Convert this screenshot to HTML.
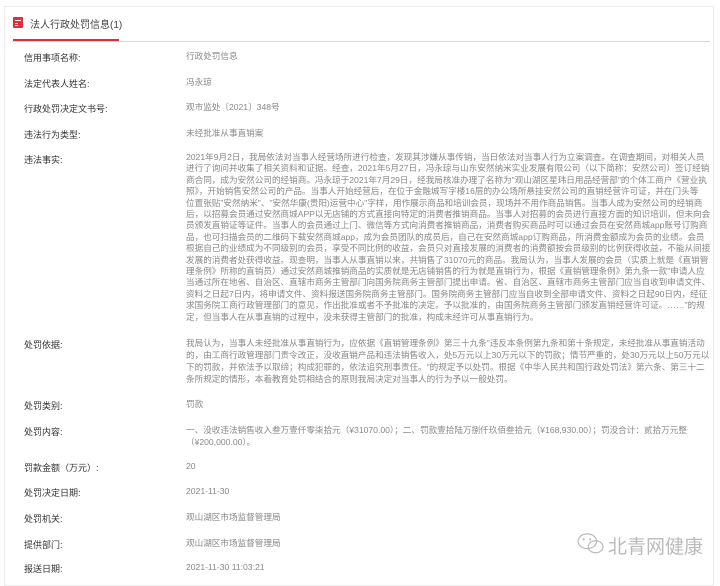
<!DOCTYPE html>
<html><head><meta charset="utf-8"><style>
*{margin:0;padding:0;box-sizing:border-box}
body{width:720px;height:575px;background:#fff;font-family:"Liberation Sans","Noto Sans CJK SC",sans-serif;position:relative;overflow:hidden}
.frame{position:absolute;left:4px;top:6px;width:710px;height:580px;border:1px solid #ececec}
.hline{position:absolute;left:12px;top:41px;width:698px;height:1px;background:#d8d8d8}
.red{position:absolute;left:13px;top:39px;width:106px;height:3px;background:#d9303a}
.icon{position:absolute;left:13px;top:17px;width:10px;height:11px;background:#d9303a;border-radius:1px}
.icon i{position:absolute;left:2px;width:6px;height:1px;background:#fff}
.title{position:absolute;left:30px;top:16px;font-size:10px;color:#444}
.l{position:absolute;left:24px;font-size:9px;color:#333;white-space:nowrap}
.v{position:absolute;left:186px;font-size:8.6px;color:#888;white-space:nowrap;line-height:12px}
.wm{position:absolute;left:608px;top:532px;font-size:19px;color:#bbb;white-space:nowrap}
</style></head><body>
<div class="frame"></div>
<div class="icon"><i style="top:3px"></i><i style="top:6px;width:3px"></i><i style="top:8px;width:3px"></i></div>
<div class="title">法人行政处罚信息(1)</div>
<div class="red"></div><div class="hline"></div>

<div class="l" style="top:51px">信用事项名称:</div><div class="v" style="top:50px">行政处罚信息</div>
<div class="l" style="top:77px">法定代表人姓名:</div><div class="v" style="top:76px">冯永琼</div>
<div class="l" style="top:102px">行政处罚决定文书号:</div><div class="v" style="top:101px">观市监处〔2021〕348号</div>
<div class="l" style="top:128px">违法行为类型:</div><div class="v" style="top:127px">未经批准从事直销案</div>

<div class="l" style="top:153px">违法事实:</div>
<div class="v" style="top:152px;line-height:11.4px">2021年9月2日，我局依法对当事人经营场所进行检查，发现其涉嫌从事传销，当日依法对当事人行为立案调查。在调查期间，对相关人员<br>进行了询问并收集了相关资料和证据。经查，2021年5月27日，冯永琼与山东安然纳米实业发展有限公司（以下简称：安然公司）签订经销<br>商合同，成为安然公司的经销商。冯永琼于2021年7月29日，经我局核准办理了名称为"观山湖区星玮日用品经营部"的个体工商户《营业执<br>照》，开始销售安然公司的产品。当事人开始经营后，在位于金融城写字楼16层的办公场所悬挂安然公司的直销经营许可证，并在门头等<br>位置张贴"安然纳米"、"安然华康(贵阳)运营中心"字样，用作展示商品和培训会员，现场并不用作商品销售。当事人成为安然公司的经销商<br>后，以招募会员通过安然商城APP以无店铺的方式直接向特定的消费者推销商品。当事人对招募的会员进行直接方面的知识培训，但未向会<br>员颁发直销证等证件。当事人的会员通过上门、微信等方式向消费者推销商品，消费者购买商品时可以通过会员在安然商城app账号订购商<br>品，也可扫描会员的二维码下载安然商城app，成为会员团队的成员后，自己在安然商城app订购商品，所消费金额成为会员的业绩。会员<br>根据自己的业绩成为不同级别的会员，享受不同比例的收益，会员只对直接发展的消费者的消费额按会员级别的比例获得收益，不能从间接<br>发展的消费者处获得收益。现查明，当事人从事直销以来，共销售了31070元的商品。我局认为，当事人发展的会员（实质上就是《直销管<br>理条例》所称的直销员）通过安然商城推销商品的实质就是无店铺销售的行为就是直销行为，根据《直销管理条例》第九条一款"申请人应<br>当通过所在地省、自治区、直辖市商务主管部门向国务院商务主管部门提出申请。省、自治区、直辖市商务主管部门应当自收到申请文件、<br>资料之日起7日内，将申请文件、资料报送国务院商务主管部门。国务院商务主管部门应当自收到全部申请文件、资料之日起90日内，经征<br>求国务院工商行政管理部门的意见，作出批准或者不予批准的决定。予以批准的，由国务院商务主管部门颁发直销经营许可证。……"的规<br>定，但当事人在从事直销的过程中，没未获得主管部门的批准，构成未经许可从事直销行为。</div>

<div class="l" style="top:338px">处罚依据:</div>
<div class="v" style="top:337px">我局认为，当事人未经批准从事直销行为，应依据《直销管理条例》第三十九条"违反本条例第九条和第十条规定，未经批准从事直销活动<br>的，由工商行政管理部门责令改正，没收直销产品和违法销售收入，处5万元以上30万元以下的罚款；情节严重的，处30万元以上50万元以<br>下的罚款，并依法予以取缔；构成犯罪的，依法追究刑事责任。"的规定予以处罚。根据《中华人民共和国行政处罚法》第六条、第三十二<br>条所规定的情形，本着教育处罚相结合的原则我局决定对当事人的行为予以一般处罚。</div>

<div class="l" style="top:399px">处罚类别:</div><div class="v" style="top:398px">罚款</div>
<div class="l" style="top:425px">处罚内容:</div>
<div class="v" style="top:424px">一、没收违法销售收入叁万壹仟零柒拾元（¥31070.00）；二、罚款壹拾陆万捌仟玖佰叁拾元（¥168,930.00）；罚没合计：贰拾万元整<br>（¥200,000.00）。</div>
<div class="l" style="top:461px">罚款金额（万元）:</div><div class="v" style="top:460px">20</div>
<div class="l" style="top:486px">处罚决定日期:</div><div class="v" style="top:485px">2021-11-30</div>
<div class="l" style="top:512px">处罚机关:</div><div class="v" style="top:511px">观山湖区市场监督管理局</div>
<div class="l" style="top:538px">提供部门:</div><div class="v" style="top:537px">观山湖区市场监督管理局</div>
<div class="l" style="top:562px">报送日期:</div><div class="v" style="top:561px">2021-11-30 11:03:21</div>

<svg style="position:absolute;left:576px;top:532px" width="30" height="24" viewBox="0 0 32 26"><g fill="none" stroke="#bbb" stroke-width="1.3"><ellipse cx="12" cy="10" rx="10" ry="8"/><ellipse cx="21" cy="16" rx="8" ry="6.5"/></g><circle cx="8" cy="8" r="1.2" fill="#bbb"/><circle cx="15" cy="8" r="1.2" fill="#bbb"/></svg>
<div class="wm">北青网健康</div>
</body></html>
